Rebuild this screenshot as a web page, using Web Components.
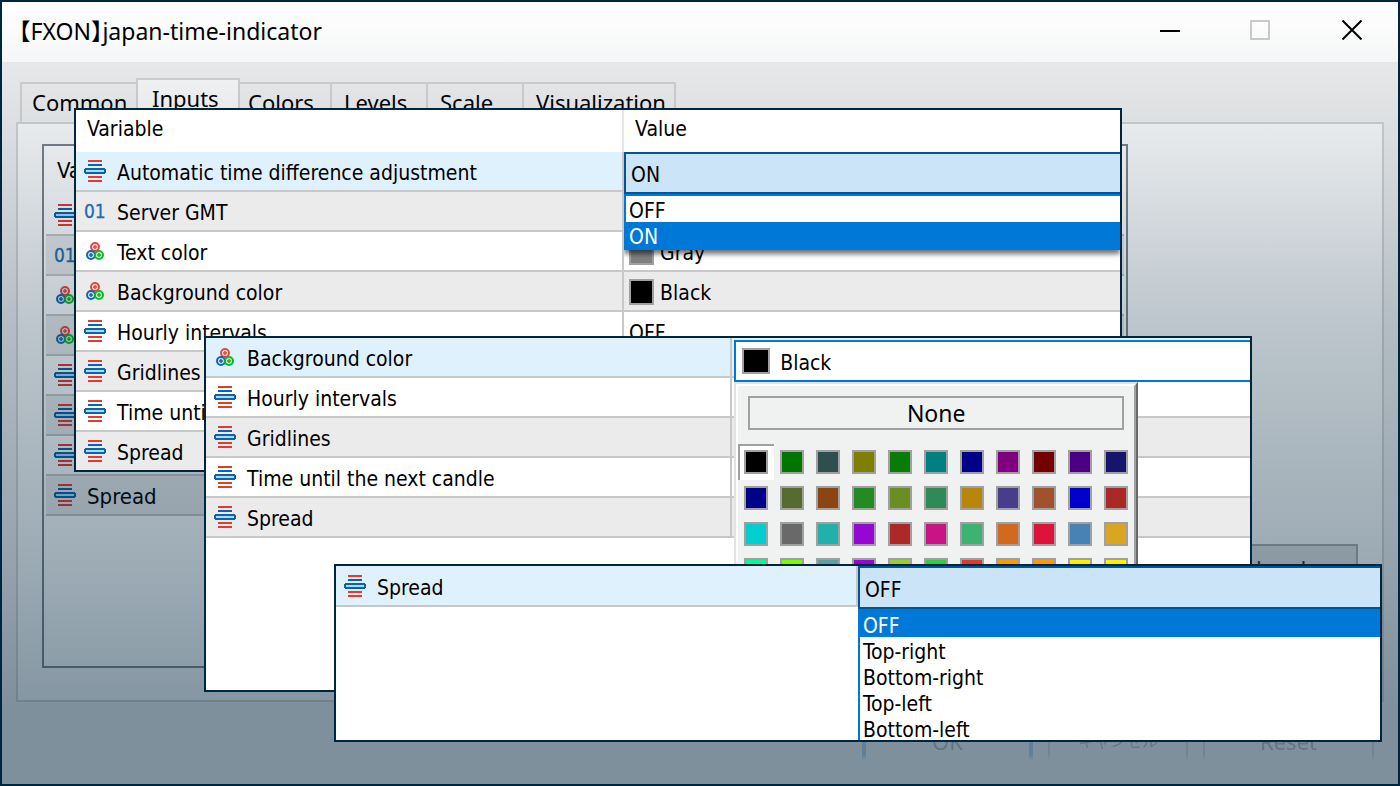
<!DOCTYPE html>
<html lang="en">
<head>
<meta charset="utf-8">
<title>【FXON】japan-time-indicator</title>
<style>
  html, body { margin: 0; height: 100%; }
  body { font-family: "Noto Sans", "Noto Sans CJK JP", sans-serif; color: #000; }
  /* The list inside the dialog: taller header, no highlighted row, larger text */
  .list { --head: 50px; --head-pad: 0; --active: #fff; font-size: 22px; }
</style>
</head>
<body>
<fx-stage>
  <fx-dialog heading="【FXON】japan-time-indicator">
    <param-table class="list" view="covered"></param-table>
  </fx-dialog>

  <fx-window slot="windows" class="first">
    <param-table view="all" class="flush">
      <drop-down slot="value-0" label="Automatic time difference adjustment" value="ON" options="OFF,ON"></drop-down>
      <color-value slot="value-2" color="#808080">Gray</color-value>
      <color-value slot="value-3" color="#000000">Black</color-value>
      <span slot="value-4">OFF</span>
    </param-table>
  </fx-window>

  <fx-window slot="windows" class="second">
    <param-table view="display">
      <color-picker slot="value-0" label="Background color" value="Black"></color-picker>
    </param-table>
  </fx-window>

  <fx-window slot="windows" class="third">
    <param-table view="spread">
      <drop-down slot="value-0" label="Spread" value="OFF" options="OFF,Top-right,Bottom-right,Top-left,Bottom-left"></drop-down>
    </param-table>
  </fx-window>
</fx-stage>

<script>
const PARAMS = {
  auto: ['enum', 'Automatic time difference adjustment'],
  gmt: ['number', 'Server GMT'],
  text: ['color', 'Text color'],
  back: ['color', 'Background color'],
  hourly: ['enum', 'Hourly intervals'],
  grid: ['enum', 'Gridlines'],
  candle: ['enum', 'Time until the next candle'],
  spread: ['enum', 'Spread']
};
const ALL = Object.keys(PARAMS);
/* "names" limits the rows that carry their name; the others show only the icon */
const VIEWS = {
  all: { head: ['Variable', 'Value'], rows: ALL },
  covered: { head: ['Variable', ''], rows: ALL, names: ['spread'] },
  display: { rows: ['back', 'hourly', 'grid', 'candle', 'spread'] },
  spread: { rows: ['spread'] }
};
const define = (name, render) => customElements.define(name, class extends HTMLElement {
  connectedCallback() {
    if (!this.shadowRoot) this.attachShadow({ mode: 'open' }).innerHTML = render(this);
  }
});

/* Parameter type icon: enum, number or color */
define('param-icon', el => {
  const kind = el.getAttribute('kind');
  const art = {
    enum: `<svg width="22" height="22" viewBox="0 0 22 22" shape-rendering="crispEdges">
      <path fill="#e63a2e" d="M4 0h14v2H4zM4 16h14v2H4zM4 20h14v2H4z"/>
      <path fill="#0a63ab" d="M4 4h14v2H4zM1 8h20v1h1v4h-1v1H1v-1H0V9h1z"/>
      <path fill="#a6e0f8" d="M2 10h18v2H2z"/></svg>`,
    number: `<span>01</span>`,
    color: `<svg width="22" height="22" viewBox="0 0 22 22">
      <g stroke-width="2"><circle cx="11" cy="7" r="4" fill="#fbdcd9" stroke="#e4483f"/>
      <circle cx="7" cy="15" r="4" fill="#c4e5f8" stroke="#1767ad"/>
      <circle cx="15" cy="15" r="4" fill="#c9f3cb" stroke="#12b52a"/></g>
      <g stroke-width="1.5"><path stroke="#e4483f" d="M9 7h4M11 5v4"/><path stroke="#1767ad" d="M5 15h4M7 13v4"/><path stroke="#12b52a" d="M13 15h4M15 13v4"/></g></svg>`
  }[kind];
  return `<style>
    :host { display: flex; flex: none; width: 22px; height: 22px; align-items: center; }
    svg { display: block; }
    span { font: 19px/22px "DejaVu Sans Condensed", "DejaVu Sans", sans-serif; color: #1f6cb0; -webkit-text-stroke: 0.3px #1f6cb0; }
  </style>${art}`;
});

/* Two-column table; editors are passed in through value-N slots */
define('param-table', el => {
  const view = VIEWS[el.getAttribute('view')];
  const rows = view.rows.map((key, i) => {
    const [kind, name] = PARAMS[key];
    const label = !view.names || view.names.includes(key) ? `<span>${name}</span>` : '';
    return `<tr><td class="name"><div><param-icon kind="${kind}"></param-icon>${label}</div></td>
      <td class="value"><slot name="value-${i}"></slot></td></tr>`;
  }).join('');
  const head = view.head ? `<thead><tr>${view.head.map(h => `<th scope="col">${h}</th>`).join('')}</tr></thead>` : '';
  return `<style>
    :host { display: block; font: 21px/26px "DejaVu Sans Condensed", "DejaVu Sans", sans-serif; }
    table { width: 100%; table-layout: fixed; border-spacing: 0; }
    th, td { box-sizing: border-box; padding: 0; text-align: left; font-weight: 400; }
    th { height: var(--head, 42px); padding: 0 11px var(--head-pad, 4px); }
    th:first-child, td.name { width: var(--split, 50%); border-right: 2px solid #c8c8c8; }
    th:first-child { border-right-color: #e5e5e5; }
    td { height: var(--row, 40px); border-bottom: 2px solid #c8c8c8; }
    td.value { position: relative; padding: 3px 0 0 5px; }
    .name div { display: flex; align-items: center; gap: 11px; padding-left: 8px; white-space: nowrap; overflow: hidden; }
    .name span { padding-top: 4px; }
    tbody tr:nth-child(odd) { background: var(--odd, #fff); }
    tbody tr:nth-child(even) { background: var(--even, #ebebeb); }
    tbody tr:first-child { background: var(--active, #e0f1fe); }
    :host(.flush) tbody tr:last-child td { height: 38px; border-bottom: 0; }
  </style><table>${head}<tbody>${rows}</tbody></table>`;
});

define('color-value', el => `<style>
    :host { display: flex; align-items: center; gap: 6px; }
    i { box-sizing: border-box; width: 25px; height: 26px; margin-bottom: 2px; border: 2px solid #a0a0a0; background: ${el.getAttribute('color')}; }
  </style><i></i><slot></slot>`);

/* Open combo box: the field and its option list */
define('drop-down', el => {
  const value = el.getAttribute('value'), options = el.getAttribute('options').split(','), label = el.getAttribute('label');
  return `<style>
    :host { position: absolute; z-index: 1; top: 0; left: 0; right: 0; }
    select { appearance: none; display: block; box-sizing: border-box; width: 100%; height: calc(var(--row, 40px) + 2px);
      margin: 0; padding: 4px 5px 0; border: 2px solid #005499; border-right: 0; border-radius: 0;
      background: #cce4f7; color: #000; font: inherit; outline: 0; }
    ul { margin: 0; padding: 0; list-style: none; border: solid #0078d7; border-width: 2px 0 2px 2px;
      background: #fff; box-shadow: 0 4px 5px rgba(0, 0, 0, .55); clip-path: inset(0 0 -12px 0); }
    li { height: 26px; padding: 0 3px; line-height: 30px; }
    li[aria-selected="true"] { background: #0078d7; color: #fff; }
  </style>
  <select aria-label="${label}">${options.map(o => `<option${o === value ? ' selected' : ''}>${o}</option>`).join('')}</select>
  <ul role="listbox" aria-label="${label}">${options.map(o => `<li role="option" aria-selected="${o === value}">${o}</li>`).join('')}</ul>`;
});

/* Color field with its palette open */
define('color-picker', el => {
  const colors = ['#000000', '#007500', '#2f4f4f', '#808000', '#077d07', '#008080', '#000088', '#800080', '#720000', '#4b0082', '#15156e',
    '#000088', '#556b2f', '#8b4513', '#228b22', '#6b8e23', '#2e8b57', '#b8860b', '#483d8b', '#a0522d', '#0000cd', '#ab2828',
    '#00ced1', '#696969', '#20b2aa', '#9408d3', '#ad2828', '#c71585', '#3cb371', '#d2691e', '#dc143c', '#4682b4', '#daa520',
    '#00fa9a', '#7cfc00', '#5f9ea0', '#9408d3', '#9acd32', '#32cd42', '#e0382c', '#ff9900', '#ff9900', '#ffee00', '#ffee00'];
  return `<style>
    :host { position: absolute; z-index: 1; top: 2px; left: 2px; right: 0; }
    label { display: flex; align-items: center; gap: 10px; box-sizing: border-box; height: 42px; padding-left: 6px;
      border: 2px solid #0078d7; border-right: 0; background: #fff; }
    label i { box-sizing: border-box; width: 28px; height: 26px; border: 2px solid #a0a0a0; background: #000; }
    input { flex: 1; min-width: 0; padding: 3px 0 0; border: 0; background: none; color: #000; font: inherit; outline: 0; }
    .palette { box-sizing: border-box; width: 404px; border: 2px solid; border-color: #e3e3e3 #696969 #696969 #e3e3e3; background: #f0f1f1; }
    .inner { border: 2px solid; border-color: #fff #a0a0a0 #a0a0a0 #fff; }
    .none { display: block; box-sizing: border-box; width: calc(100% - 20px); height: 34px; margin: 10px 10px 14px; padding: 0;
      border: 2px solid #a0a0a0; background: none; color: #000; font: 23px/30px "Noto Sans", sans-serif; }
    .grid { display: grid; grid-template-columns: repeat(11, 36px); }
    .grid button { display: grid; place-items: center; height: 36px; padding: 0; border: 0; background: none; }
    .grid button[aria-pressed="true"] { background: #fff; box-shadow: inset 2px 2px #a0a0a0; }
    .grid i { box-sizing: border-box; width: 24px; height: 24px; border: 2px solid #a0a0a0; }
  </style>
  <label><i></i><input value="${el.getAttribute('value')}" aria-label="${el.getAttribute('label')}"></label>
  <div class="palette"><div class="inner"><button class="none">None</button>
    <div class="grid">${colors.map((c, i) => `<button aria-label="${c}" aria-pressed="${i === 0}"><i style="background:${c}"></i></button>`).join('')}</div>
  </div></div>`;
});

/* Floating white window over the dialog */
define('fx-window', () => `<style>
    :host { position: absolute; isolation: isolate; box-sizing: border-box; border: 2px solid #00263f; background: #fff; overflow: hidden; }
  </style><slot></slot>`);

define('tab-strip', () => `<style>
    :host { display: flex; align-items: flex-end; height: 44px; padding-left: 4px; }
    button { box-sizing: border-box; height: 40px; margin: 0; padding: 0 0 2px 12px; border: solid #d4d4d4; border-width: 2px 0 0 2px;
      background: #f0f0f0; color: #000; font: 22px/30px "Noto Sans", sans-serif; text-align: left; width: 96px; }
    .common { width: 116px; padding-left: 10px; }
    .inputs { width: 104px; height: 46px; margin-bottom: -2px; padding: 0 0 8px 14px; border-right-width: 2px; background: #fbfbfb; position: relative; }
    .inputs + button { width: 90px; padding-left: 8px; border-left: 0; }
    .last { width: 154px; border-right-width: 2px; }
  </style>
  <button class="common" role="tab">Common</button><button class="inputs" role="tab" aria-selected="true">Inputs</button><button role="tab">Colors</button><button role="tab">Levels</button><button role="tab">Scale</button><button class="last" role="tab">Visualization</button>`);

define('title-bar', () => `<style>
    :host { display: flex; align-items: center; justify-content: space-between; height: 60px; background: #fff; }
    h1 { margin: 0; padding: 0 0 2px 17px; font: 23px/32px "Noto Sans", "Noto Sans CJK JP", sans-serif; font-feature-settings: "halt"; white-space: nowrap; }
    div { display: flex; align-self: stretch; }
    button { display: grid; place-items: center; width: 92px; height: 56px; padding: 0; border: 0; background: none; }
  </style>
  <h1><slot></slot></h1>
  <div>
    <button aria-label="Minimize"><svg width="24" height="20"><path d="M4 11h20" stroke="#000" stroke-width="2" shape-rendering="crispEdges"/></svg></button>
    <button aria-label="Maximize" disabled><svg width="20" height="20"><path d="M1 1h18v18H1z" fill="none" stroke="#ccc" stroke-width="2"/></svg></button>
    <button aria-label="Close"><svg width="20" height="20"><path d="M.5.5l19 19M19.500.5l-19 19" stroke="#000" stroke-width="2"/></svg></button>
  </div>`);

define('fx-dialog', el => `<style>
    :host { display: flex; flex-direction: column; position: relative; box-sizing: border-box; min-height: 100vh; border: 2px solid #00263f; background: #f0f0f0; }
    :host::after { content: ""; position: absolute; inset: 0; pointer-events: none;
      background: linear-gradient(rgba(0,38,63,0), rgba(0,38,63,.045) 8%, rgba(0,38,63,.09) 17%, rgba(0,38,63,.26) 42%, rgba(0,38,63,.38) 71%, rgba(0,38,63,.475) 90%); }
    main { padding: 16px 14px 0; }
    .sheet { display: flex; align-items: flex-start; gap: 76px; box-sizing: border-box; height: 580px; padding: 20px 24px 32px; border: 2px solid #d4d4d4; background: #fcfcfc; }
    .box { flex: 1; box-sizing: border-box; height: 524px; padding: 0 2px; border: 2px solid #7c838c; background: #fff; overflow: hidden; }
    .load { box-sizing: border-box; width: 154px; height: 44px; margin-top: 400px; padding: 4px 0 0; border: 2px solid #adadad; background: #e1e1e1; color: #333; font: 22px/30px "Noto Sans", sans-serif; }
    footer { display: flex; justify-content: flex-end; gap: 15px; padding: 18px 24px 0; opacity: .25; mask: linear-gradient(#000 85%, transparent 95%); }
    footer button { box-sizing: border-box; width: 171px; height: 44px; padding: 0 0 2px; border: 2px solid #8d979f; background: none; color: #222; font: 22px/30px "Noto Sans", "Noto Sans CJK JP", sans-serif; }
    footer .ok { border: 4px solid #0078d7; }
    footer .cancel { width: 140px; font-size: 16px; }
  </style>
  <title-bar>${el.getAttribute('heading')}</title-bar>
  <main><tab-strip role="tablist"></tab-strip>
    <div class="sheet"><div class="box"><slot></slot></div><button class="load">Load</button></div></main>
  <footer><button class="ok">OK</button><button class="cancel">キャンセル</button><button>Reset</button></footer>`);

define('fx-stage', () => `<style>
    :host { display: block; position: relative; min-height: 100vh; }
    ::slotted(.first) { top: 108px; left: 74px; right: 278px; --split: 52.5%; }
    ::slotted(.second) { top: 336px; left: 204px; right: 148px; height: 356px; --split: 50.4%; --odd: #ebebeb; --even: #fff; }
    ::slotted(.third) { top: 564px; left: 334px; right: 18px; height: 178px; --split: 50%; --row: 41px; }
  </style><slot></slot><slot name="windows"></slot>`);
</script>
</body>
</html>
